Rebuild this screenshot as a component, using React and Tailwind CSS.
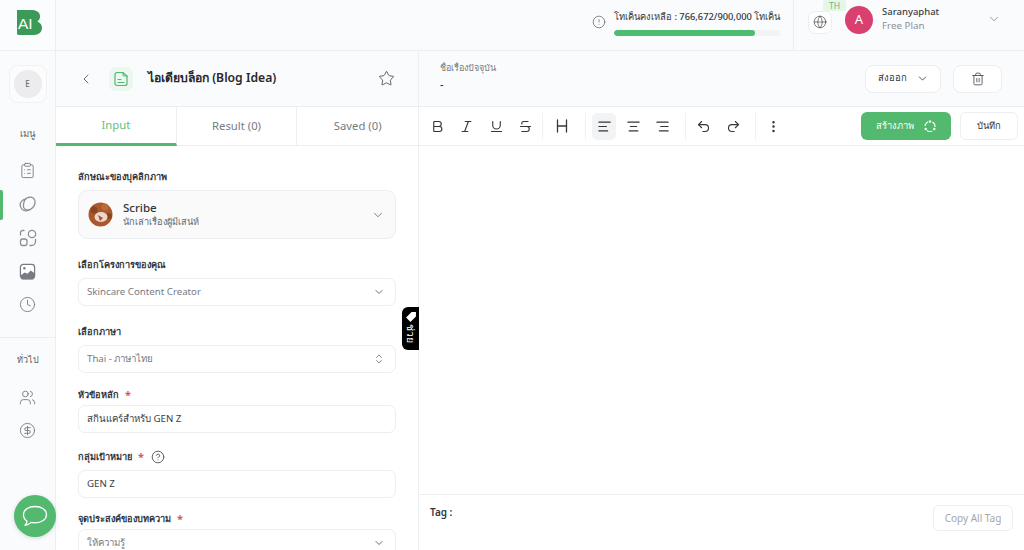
import React from "react";
import {
  ChevronLeft, ChevronDown, ChevronsUpDown, Star, Bold, Italic, Underline, Strikethrough, Heading,
  AlignLeft, AlignCenter, AlignRight, Undo2, Redo2, MoreVertical, Trash2, Globe, CircleAlert,
  ClipboardList, Clock, Users, CircleDollarSign, CircleHelp,
} from "lucide-react";

const Logo = () => (
  <svg width="25" height="25" viewBox="0 0 26 26">
    <path d="M0 0h15c5.500 0 9 2.500 9 6.500 0 2.500-1 4.200-2.800 5.500 2.500 1 4.800 3 4.800 6.500 0 4.500-3.500 7.500-8.500 7.500H1.500a1.500 1.500 0 0 1-1.500-1.500z" fill="#3b9a58" />
    <text x="1" y="20" fontSize="16" fill="#fff" fontFamily="Liberation Sans, sans-serif">AI</text>
  </svg>
);

const Overlap = () => (
  <svg width="18" height="18" viewBox="0 0 18 18" fill="none" stroke="#8b8f96" strokeWidth="1.300">
    <circle cx="7" cy="10" r="5.800" />
    <path d="M5.500 5.500C7 2.800 9.500 1.800 12 2.200c3 .5 4.500 3 4 6-.5 3.500-3.500 6.500-7 6.800-2.500.2-4.500-1.500-4.600-4-.1-2 .4-3.800 1.100-5.500z" fill="#fafbfd" />
  </svg>
);

const Grid4 = () => (
  <svg width="18" height="18" viewBox="0 0 18 18" fill="none" stroke="#8b8f96" strokeWidth="1.300">
    <path d="M5 1.500H3.500a2 2 0 0 0-2 2V6" strokeLinecap="round" />
    <circle cx="13" cy="5" r="3.700" />
    <rect x="1.500" y="10" width="6.500" height="6.500" rx="2.200" />
    <path d="M16.500 10.500v2a4 4 0 0 1-4 4h-1.500" strokeLinecap="round" />
  </svg>
);

const Picture = () => (
  <svg width="17" height="17" viewBox="0 0 18 18" fill="none">
    <rect x="1.500" y="1.500" width="15" height="15" rx="3" fill="#fff" stroke="#777b82" strokeWidth="1.300" />
    <path d="M2 13l4-3 3 1.500 3.500-3.500 3.500 2.500v5a2 2 0 0 1-2 2H4a2 2 0 0 1-2-2z" fill="#777b82" />
    <circle cx="5.700" cy="5.500" r="1.300" fill="#777b82" />
  </svg>
);

const DocIcon = () => (
  <svg width="16" height="16" viewBox="0 0 16 16" fill="none" stroke="#4dbb70" strokeWidth="1.200" strokeLinecap="round">
    <path d="M4 1.500h6l4 3.500v7.500a2 2 0 0 1-2 2H4a2 2 0 0 1-2-2v-9a2 2 0 0 1 2-2z" />
    <path d="M10 1.500v2a1.500 1.500 0 0 0 1.500 1.500H14M5 8.500h3M5 11.500h6" />
  </svg>
);

const Cycle = () => (
  <svg width="14" height="14" viewBox="0 0 14 14" fill="none" stroke="#fff" strokeWidth="1.100">
    <circle cx="7" cy="7.500" r="5" strokeDasharray="5.500 4.970" transform="rotate(-61.500 7 7.500)" />
    <circle cx="7" cy="2.500" r="1.200" fill="#fff" stroke="none" />
    <circle cx="2.700" cy="10" r="1.200" fill="#fff" stroke="none" />
    <circle cx="11.300" cy="10" r="1.200" fill="#fff" stroke="none" />
  </svg>
);

const Bubble = () => (
  <svg width="26" height="22" viewBox="0 0 26 22" fill="none" stroke="#fff" strokeWidth="1.300" strokeLinejoin="round">
    <path d="M13 1.500c6.500 0 11.500 3.500 11.500 8.200S19.500 17.800 13 17.800c-1.300 0-2.600-.1-3.800-.4-1.700 1.600-3.800 2.600-6.200 3 1.200-1.300 1.900-2.700 2-4.300C2.900 14.700 1.500 12.400 1.500 9.700 1.500 5 6.500 1.500 13 1.500z" />
  </svg>
);

const ScribeAvatar = () => (
  <svg width="25" height="25" viewBox="0 0 25 25" className="shrink-0">
    <circle cx="12.500" cy="12.500" r="12" fill="#a9592b" />
    <circle cx="6" cy="8" r="3.500" fill="#8a4420" />
    <circle cx="17" cy="5" r="3.500" fill="#bb6b35" />
    <circle cx="21" cy="14" r="3" fill="#8a4420" />
    <ellipse cx="13" cy="15" rx="6.500" ry="5" fill="#ecd7cb" />
    <path d="M10 13l5 3-3 3z" fill="#b54b45" />
  </svg>
);

const Label = ({ children, required, help }) => (
  <div className="flex items-center text-[9.200px] leading-[14px] font-semibold text-[#33363b]">
    <span>{children}</span>
    {required && <span className="ml-[6px] text-[#d9484c] text-[11px]">*</span>}
    {help && <CircleHelp size={14} strokeWidth={1.500} className="ml-[7px] text-[#4b4f55]" />}
  </div>
);

const Field = ({ children, icon, dim }) => (
  <div className={`h-[28px] w-[318px] shrink-0 flex items-center justify-between pl-[8px] pr-[10px] bg-white border border-[#eceef1] rounded-[7px] text-[9.700px] ${dim ? "text-[#777b82]" : "text-[#3a3d42]"}`}>
    <span>{children}</span>
    {icon}
  </div>
);

const Chevron = <ChevronDown size={12} strokeWidth={1.800} className="text-[#55595f]" />;
const Updown = <ChevronsUpDown size={12} strokeWidth={1.600} className="text-[#6a6e74]" />;

const SideIcon = ({ children, active }) => (
  <div className="relative h-[33.500px] w-full flex items-center justify-center">
    {active && <div className="absolute left-0 top-[2px] h-[30px] w-[3px] bg-[#52b96f] rounded-r-[2px]" />}
    {children}
  </div>
);

const Tool = ({ children, active, className = "" }) => (
  <div className={`h-[27px] w-[24px] rounded-[5px] flex items-center justify-center text-[#33363b] ${active ? "bg-[#f2f3f5]" : ""} ${className}`}>
    {children}
  </div>
);

const Sep = () => <div className="h-[27px] w-px bg-[#f0f1f3]" />;

export default function App() {
  return (
    <div className="relative h-[550px] w-[1024px] overflow-hidden bg-white flex flex-col text-[#33363b]" style={{ fontFamily: '"Noto Sans", "Noto Sans CJK SC", sans-serif' }}>
      {/* top bar */}
      <header className="h-[51px] shrink-0 flex border-b border-[#eceef1] bg-[#fafbfd]">
        <div className="w-[56px] shrink-0 border-r border-[#eceef1] bg-[#fbfcfd] flex items-center justify-center pl-[3px] pb-[6px]">
          <Logo />
        </div>
        <div className="flex-1 flex justify-end">
          <div className="flex items-center pr-[13px]">
            <CircleAlert size={14} strokeWidth={1.300} className="text-[#63676d] mr-[8px] mb-[6px]" />
            <div className="w-[166px] mb-[5px]">
              <div className="text-[9.300px] leading-[14px] font-medium text-[#33363b] whitespace-nowrap">โทเค็นคงเหลือ : 766,672/900,000 โทเค็น</div>
              <div className="mt-[6px] h-[6px] rounded-full bg-[#f2f3f5] overflow-hidden">
                <div className="h-full w-[141px] rounded-full bg-[#4dbb70]" />
              </div>
            </div>
          </div>
          <div className="w-[231px] border-l border-[#eceef1] flex items-center pl-[14px] pb-[6px]">
            <div className="relative">
              <div className="w-[24px] h-[23px] rounded-[7px] bg-white border border-[#eceef1] flex items-center justify-center">
                <Globe size={14} strokeWidth={1.200} className="text-[#44474c]" />
              </div>
              <div className="absolute left-[15px] top-[-11px] w-[23px] h-[11px] bg-[#e5f5ea] rounded-[3px] text-[8.500px] leading-[11px] text-[#5cbf79] text-center">TH</div>
            </div>
            <div className="ml-[13px] mb-[4px] w-[28px] h-[28px] rounded-full bg-[#d9406f] text-white text-[13px] flex items-center justify-center">A</div>
            <div className="ml-[9px] mb-[6px] w-[100px]">
              <div className="text-[9.500px] leading-[14px] font-medium text-[#3a3d42]">Saranyaphat</div>
              <div className="text-[9.800px] leading-[14px] text-[#8d9197]">Free Plan</div>
            </div>
            <ChevronDown size={14} strokeWidth={1.300} className="text-[#7a7e84] ml-[5px] mb-[6px]" />
          </div>
        </div>
      </header>

      <div className="flex-1 min-h-0 flex">
        {/* sidebar */}
        <aside className="w-[56px] shrink-0 border-r border-[#eceef1] bg-[#fafbfd] flex flex-col items-center pt-[14px]">
          <div className="w-[38px] h-[38px] rounded-[9px] bg-[#fcfcfd] border border-[#f0f1f3] flex items-center justify-center">
            <div className="w-[28px] h-[28px] rounded-full bg-[#ececee] text-[8px] font-medium text-[#6a6e74] flex items-center justify-center">E</div>
          </div>
          <div className="mt-[24px] text-[9.500px] leading-[14px] text-[#5b5f65]">เมนู</div>
          <div className="w-full mt-[13px]">
            <SideIcon><ClipboardList size={17} strokeWidth={1.200} className="text-[#6f7379]" /></SideIcon>
            <SideIcon active><Overlap /></SideIcon>
            <SideIcon><Grid4 /></SideIcon>
            <SideIcon><Picture /></SideIcon>
            <SideIcon><Clock size={17} strokeWidth={1.200} className="text-[#6f7379]" /></SideIcon>
          </div>
          <div className="w-full h-px bg-[#eceef1] mt-[15px]" />
          <div className="mt-[15px] text-[9px] leading-[14px] text-[#5b5f65]">ทั่วไป</div>
          <div className="w-full mt-[14px]">
            <SideIcon><Users size={17} strokeWidth={1.200} className="text-[#6f7379]" /></SideIcon>
            <SideIcon><CircleDollarSign size={17} strokeWidth={1.200} className="text-[#6f7379]" /></SideIcon>
          </div>
        </aside>

        {/* left panel */}
        <section className="w-[363px] shrink-0 border-r border-[#eceef1] flex flex-col min-h-0 bg-white">
          <div className="h-[56px] shrink-0 bg-[#fafbfd] border-b border-[#eceef1] flex items-center pl-[22px] pr-[23px]">
            <ChevronLeft size={16} strokeWidth={1.300} className="text-[#55595f]" />
            <div className="ml-[15px] w-[24px] h-[24px] rounded-[7px] bg-[#ebf7ef] flex items-center justify-center"><DocIcon /></div>
            <div className="ml-[15px] flex-1 text-[12.200px] font-semibold text-[#26282c]">ไอเดียบล็อก (Blog Idea)</div>
            <Star size={17} strokeWidth={1.200} className="text-[#44474c]" />
          </div>
          <div className="h-[39px] shrink-0 flex border-b border-[#eceef1] text-[11.300px] text-[#777b82]">
            <div className="w-[121px] flex items-center justify-center text-[#62bf7e] border-b-[3px] border-[#52b96f] border-r border-r-[#eceef1] h-[39px]">Input</div>
            <div className="w-[121px] flex items-center justify-center border-r border-[#eceef1]">Result (0)</div>
            <div className="w-[121px] flex items-center justify-center">Saved (0)</div>
          </div>
          <div className="flex-1 min-h-0 overflow-hidden px-[22px] pt-[24px] flex flex-col">
            <Label>ลักษณะของบุคลิกภาพ</Label>
            <div className="mt-[6px] h-[49px] shrink-0 rounded-[9px] bg-[#fafafb] border border-[#eceef1] flex items-center pl-[9px] pr-[10px]">
              <ScribeAvatar />
              <div className="ml-[10px] flex-1">
                <div className="text-[11.500px] leading-[15px] font-medium text-[#33363b]">Scribe</div>
                <div className="text-[9.200px] leading-[14px] text-[#63676d]">นักเล่าเรื่องผู้มีเสน่ห์</div>
              </div>
              <ChevronDown size={14} strokeWidth={1.300} className="text-[#55595f]" />
            </div>
            <div className="mt-[19px]"><Label>เลือกโครงการของคุณ</Label></div>
            <div className="mt-[6px]"><Field dim icon={Chevron}>Skincare Content Creator</Field></div>
            <div className="mt-[19px]"><Label>เลือกภาษา</Label></div>
            <div className="mt-[6px]"><Field dim icon={Updown}>Thai - ภาษาไทย</Field></div>
            <div className="mt-[15px]"><Label required>หัวข้อหลัก</Label></div>
            <div className="mt-[3px]"><Field>สกินแคร์สำหรับ GEN Z</Field></div>
            <div className="mt-[17px]"><Label required help>กลุ่มเป้าหมาย</Label></div>
            <div className="mt-[6px]"><Field>GEN Z</Field></div>
            <div className="mt-[14px]"><Label required>จุดประสงค์ของบทความ</Label></div>
            <div className="mt-[3px]"><Field dim icon={Chevron}>ให้ความรู้</Field></div>
          </div>
        </section>

        {/* right panel */}
        <main className="flex-1 min-w-0 flex flex-col">
          <div className="h-[56px] shrink-0 bg-[#fafbfd] border-b border-[#eceef1] flex items-center pl-[21px] pr-[22px]">
            <div className="flex-1 mb-[4px]">
              <div className="text-[9px] leading-[14px] text-[#777b82]">ชื่อเรื่องปัจจุบัน</div>
              <div className="mt-[3px] text-[11px] leading-[14px] font-medium text-[#33363b]">-</div>
            </div>
            <div className="w-[76px] h-[28px] rounded-[8px] bg-white border border-[#eceef1] flex items-center justify-center gap-[9px] text-[9.500px] font-medium">
              ส่งออก <ChevronDown size={13} strokeWidth={1.500} />
            </div>
            <div className="ml-[12px] w-[49px] h-[28px] rounded-[8px] bg-white border border-[#eceef1] flex items-center justify-center">
              <Trash2 size={14} strokeWidth={1.300} className="text-[#33363b]" />
            </div>
          </div>
          <div className="h-[39px] shrink-0 border-b border-[#eceef1] flex items-center pl-[6px] pr-[6px]">
            <Tool><Bold size={15} strokeWidth={1.800} /></Tool>
            <Tool className="ml-[5px]"><Italic size={15} strokeWidth={1.800} /></Tool>
            <Tool className="ml-[6px]"><Underline size={15} strokeWidth={1.800} /></Tool>
            <Tool className="ml-[5px]"><Strikethrough size={15} strokeWidth={1.800} /></Tool>
            <div className="ml-[5px]"><Sep /></div>
            <Tool className="ml-[7px]"><Heading size={18} strokeWidth={1.700} /></Tool>
            <div className="ml-[11px]"><Sep /></div>
            <Tool active className="ml-[6px]"><AlignLeft size={15} strokeWidth={1.800} /></Tool>
            <Tool className="ml-[5px]"><AlignCenter size={15} strokeWidth={1.800} /></Tool>
            <Tool className="ml-[5px]"><AlignRight size={15} strokeWidth={1.800} /></Tool>
            <div className="ml-[11px]"><Sep /></div>
            <Tool className="ml-[5px]"><Undo2 size={15} strokeWidth={1.800} /></Tool>
            <Tool className="ml-[6px]"><Redo2 size={15} strokeWidth={1.800} /></Tool>
            <div className="ml-[10px]"><Sep /></div>
            <Tool className="ml-[5px]"><MoreVertical size={15} strokeWidth={2} /></Tool>
            <div className="flex-1" />
            <div className="w-[90px] h-[28px] rounded-[6px] bg-[#52b96f] text-white text-[9.300px] font-medium flex items-center justify-center gap-[9px]">
              สร้างภาพ <Cycle />
            </div>
            <div className="ml-[9px] w-[58px] h-[28px] rounded-[6px] bg-white border border-[#eceef1] text-[9.300px] font-medium flex items-center justify-center">บันทึก</div>
          </div>
          <div className="flex-1" />
          <div className="h-[56px] shrink-0 border-t border-[#eceef1] flex items-start pl-[11px] pr-[11px] pt-[10px]">
            <div className="flex-1 text-[10px] leading-[14px] font-semibold text-[#33363b]">Tag :</div>
            <div className="w-[80px] h-[26px] rounded-[6px] border border-[#eceef1] text-[10px] text-[#a3a6ab] flex items-center justify-center">Copy All Tag</div>
          </div>
        </main>
      </div>

      {/* floating help tab */}
      <div className="absolute left-[402px] top-[307px] w-[17px] h-[43px] bg-black rounded-l-[6px] flex flex-col items-center pt-[4px] text-white">
        <svg width="12" height="12" viewBox="0 0 11 11" fill="#fff" className="shrink-0"><path d="M1 6l5-5 4 0 0 4-5 5z" /></svg>
        <span className="mt-[1px] text-[10.500px] leading-[12px] font-medium whitespace-nowrap [writing-mode:vertical-rl] [text-orientation:sideways]">ช่วย</span>
      </div>

      {/* chat button */}
      <div className="absolute left-[14px] top-[495px] w-[42px] h-[42px] rounded-full bg-[#52b96f] shadow-[0_1px_4px_rgba(0,0,0,0.15)] flex items-center justify-center">
        <Bubble />
      </div>
    </div>
  );
}
